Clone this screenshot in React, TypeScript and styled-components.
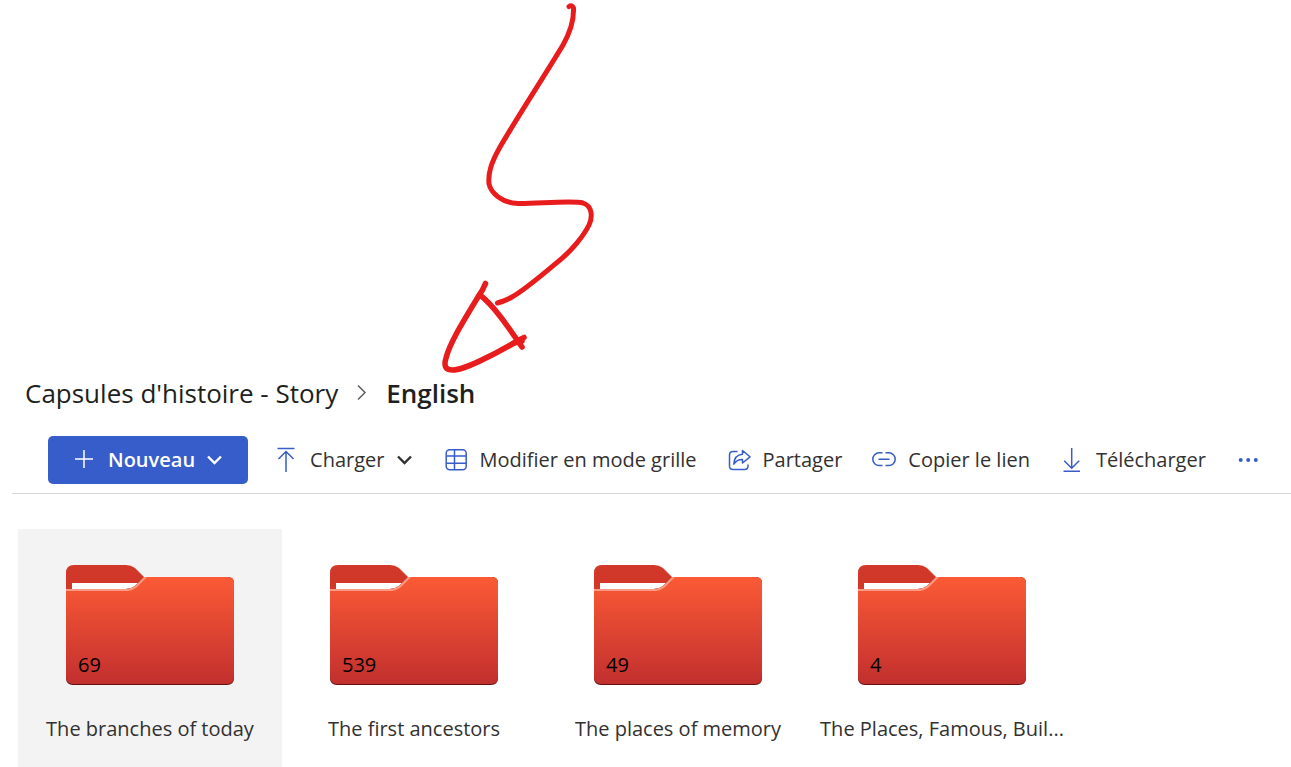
import React from "react";
import styled, { createGlobalStyle } from "styled-components";

const GlobalStyle = createGlobalStyle`
  *, *::before, *::after { box-sizing: border-box; }
  body {
    margin: 0;
    background: #ffffff;
    color: #323130;
    font-family: "Open Sans", "Noto Sans", sans-serif;
  }
`;

const Page = styled.main`
  position: relative;
  display: flex;
  flex-direction: column;
  min-height: 100vh;
  padding-top: 370px;
  overflow: hidden;
`;

const Sketch = styled.svg`
  position: absolute;
  top: 0;
  left: 440px;
  width: 160px;
  height: 380px;
  fill: none;
  stroke: #e81c1c;
  stroke-width: 5.6;
  stroke-linecap: round;
  stroke-linejoin: round;
  pointer-events: none;
`;

const Breadcrumb = styled.nav`
  display: flex;
  align-items: center;
  gap: 12px;
  height: 46px;
  padding-left: 25px;
  font-size: 26px;
  line-height: 46px;
  white-space: nowrap;
`;

const Crumb = styled.a<{ $current?: boolean }>`
  color: #201f1e;
  text-decoration: none;
  font-weight: ${(p) => (p.$current ? 600 : 400)};
`;

const Toolbar = styled.div`
  display: flex;
  align-items: center;
  gap: 26px;
  height: 78px;
  margin-left: 12px;
  padding: 20px 0 9px 36px;
  border-bottom: 1px solid #d6d6d6;
`;

const CommandList = styled.div`
  display: flex;
  align-items: center;
  gap: 30px;
`;

const Command = styled.button<{ $primary?: boolean }>`
  display: flex;
  flex: none;
  align-items: center;
  gap: 12px;
  height: 48px;
  padding: ${(p) => (p.$primary ? "0 24px" : "0")};
  border: 0;
  border-radius: 5px;
  background: ${(p) => (p.$primary ? "#365dc9" : "transparent")};
  color: ${(p) => (p.$primary ? "#ffffff" : "#323130")};
  font-family: inherit;
  font-size: 20px;
  font-weight: ${(p) => (p.$primary ? 600 : 400)};
  line-height: 48px;
  white-space: nowrap;
  cursor: pointer;
`;

const Icon = styled.svg<{ $color?: string }>`
  display: block;
  flex: none;
  width: 24px;
  height: 26px;
  fill: none;
  stroke: ${(p) => p.$color ?? "#365dc9"};
  stroke-width: 1.5;
`;

const Chevron = styled.svg`
  display: block;
  flex: none;
  width: 17px;
  height: 16px;
  fill: none;
  stroke: currentColor;
  stroke-width: 2.4;
`;

const Files = styled.ul`
  display: flex;
  flex: 1;
  margin: 0;
  padding: 35px 0 0 18px;
  list-style: none;
`;

const Tile = styled.li<{ $active?: boolean }>`
  display: flex;
  flex: none;
  flex-direction: column;
  align-items: center;
  gap: 28px;
  width: 264px;
  min-height: 238px;
  padding: 36px 12px 20px;
  background: ${(p) => (p.$active ? "#f3f3f3" : "transparent")};
`;

const FolderBox = styled.div`
  position: relative;
  width: 168px;
  height: 120px;
`;

const Count = styled.span`
  position: absolute;
  left: 12px;
  bottom: 6px;
  color: #000000;
  font-size: 20px;
  line-height: 28px;
`;

const Name = styled.a`
  color: #323130;
  font-size: 20px;
  line-height: 32px;
  text-decoration: none;
  white-space: nowrap;
`;

const folders = [
  { name: "The branches of today", count: 69 },
  { name: "The first ancestors", count: 539 },
  { name: "The places of memory", count: 49 },
  { name: "The Places, Famous, Buil...", count: 4 },
];

function Folder({ id }: { id: string }) {
  return (
    <svg width="168" height="120" viewBox="0 0 168 120" aria-hidden="true">
      <defs>
        <linearGradient id={id} x1="0" y1="12" x2="0" y2="120" gradientUnits="userSpaceOnUse">
          <stop offset="0" stopColor="#fb5a36" />
          <stop offset="0.12" stopColor="#f45534" />
          <stop offset="1" stopColor="#c12f2e" />
        </linearGradient>
      </defs>
      <path d="M0 40V8Q0 0 8 0H60Q65 0 69 3L80 14V40Z" fill="#d13829" />
      <path d="M6 18H76V32H6Z" fill="#ffffff" />
      <path
        d="M0 24H60Q65 24 69 21L78 12H162Q168 12 168 18V113Q168 120 161 120H7Q0 120 0 113Z"
        fill="#651010"
      />
      <path
        d="M0 24H60Q65 24 69 21L78 12H162Q168 12 168 18V112Q168 119 161 119H7Q0 119 0 112Z"
        fill={`url(#${id})`}
      />
      <path d="M0 24H60Q65 24 69 21L78 12H81L71 22Q66 26 61 26H0Z" fill="#fb9a84" />
    </svg>
  );
}

function DownChevron() {
  return (
    <Chevron viewBox="1 0 17 16" aria-hidden="true">
      <path d="M2 4.500 8.500 11 15 4.500" />
    </Chevron>
  );
}

export default function App() {
  return (
    <>
      <GlobalStyle />
      <Page>
        <Breadcrumb aria-label="Breadcrumb">
          <Crumb href="#story">Capsules d'histoire - Story</Crumb>
          <Icon viewBox="0 0 24 26" $color="#605e5c" aria-hidden="true">
            <path d="M8 5.5 15 12.5 8 19.5" />
          </Icon>
          <Crumb href="#english" $current aria-current="page">
            English
          </Crumb>
        </Breadcrumb>

        <Toolbar role="toolbar">
          <Command type="button" $primary>
            <Icon viewBox="0 0 24 26" $color="#ffffff" aria-hidden="true">
              <path d="M12 3V21M3 12H21" />
            </Icon>
            Nouveau
            <DownChevron />
          </Command>
          <CommandList>
            <Command type="button">
              <Icon viewBox="0 0 24 26" aria-hidden="true">
                <path d="M3.5 1.5H20.5M12 25V4.5M4.5 12 12 4.5 19.5 12" />
              </Icon>
              Charger
              <DownChevron />
            </Command>
            <Command type="button">
              <Icon viewBox="0 0 24 26" aria-hidden="true">
                <rect x="2.2" y="2.7" width="20" height="20" rx="3.5" />
                <path d="M10.5 2.7V22.7M2.2 9H22.2M2.2 16.2H22.2" />
              </Icon>
              Modifier en mode grille
            </Command>
            <Command type="button">
              <Icon viewBox="0 0 24 26" strokeLinejoin="round" aria-hidden="true">
                <path d="M10.5 4.5H6Q2.5 4.5 2.5 8V19Q2.5 22.5 6 22.5H17.5Q21 22.5 21 19V17.5" />
                <path d="M15.5 3.5 23 9.8 15.5 16V12.5Q10 12.3 6.8 17.2Q7.3 7.8 15.5 7.2Z" />
              </Icon>
              Partager
            </Command>
            <Command type="button">
              <Icon viewBox="0 0 24 26" aria-hidden="true">
                <path d="M10.5 5.8H7.2A6.4 6.4 0 0 0 7.2 18.6H10.5M13.5 5.8H16.8A6.4 6.4 0 0 1 16.8 18.6H13.5M6.5 12.2H17.5" />
              </Icon>
              Copier le lien
            </Command>
            <Command type="button">
              <Icon viewBox="0 0 24 26" aria-hidden="true">
                <path d="M3.5 24.2H20M11.7 1V21.2M4.2 13.7 11.7 21.2 19.2 13.7" />
              </Icon>
              Télécharger
            </Command>
            <Command type="button" aria-label="Plus">
              <Icon viewBox="0 0 24 26" aria-hidden="true">
                <g fill="#365dc9" stroke="none">
                  <circle cx="4.7" cy="13" r="2" />
                  <circle cx="12.2" cy="13" r="2" />
                  <circle cx="19.8" cy="13" r="2" />
                </g>
              </Icon>
            </Command>
          </CommandList>
        </Toolbar>

        <Files>
          {folders.map((folder, index) => (
            <Tile key={folder.name} $active={index === 0}>
              <FolderBox>
                <Folder id={`folder-${index}`} />
                <Count>{folder.count}</Count>
              </FolderBox>
              <Name href="#folder">{folder.name}</Name>
            </Tile>
          ))}
        </Files>

        <Sketch viewBox="440 0 160 380" aria-hidden="true">
          <path
            strokeWidth="5"
            d="M569 6.5Q572 4.5 573.5 8C574 20 571 31 563 45C545 75 520 113 500 147C491 163 488 173 489 184C491 193 502 203 518 203.500C535 204 572 200 583 203C592 206 593 216 589 225C583 237 571 251 560 260C548 270 525 290 512 297Q505 301 497.500 303"
          />
          <path d="M485.500 283.500Q483 290 478 297C461 325 450 343 446 358C443 368 447 370 453 370C463 370 492 356 514 343Q518 340 524 337.500" />
          <path d="M480 295C493 305 507 325 522 347M514 343 522 341" />
        </Sketch>
      </Page>
    </>
  );
}
